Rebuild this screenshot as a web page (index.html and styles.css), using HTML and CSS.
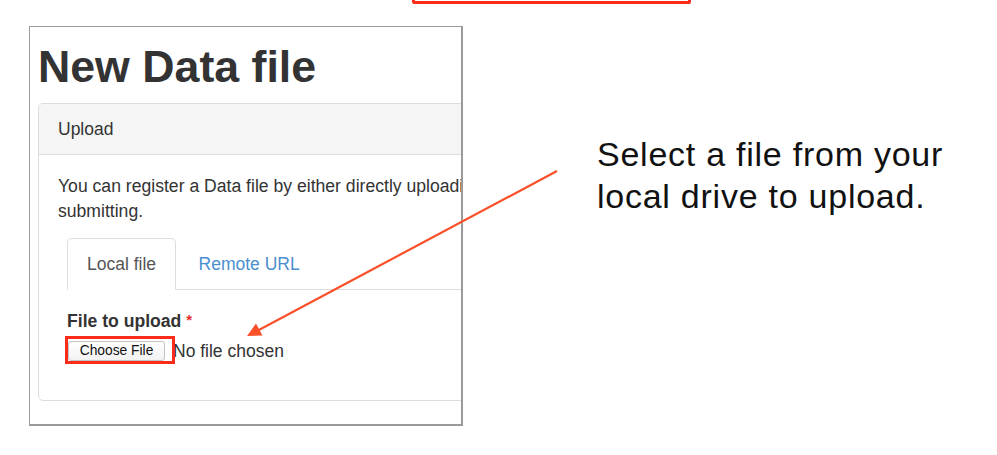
FILE: index.html
```html
<!DOCTYPE html>
<html lang="en">
<head>
<meta charset="utf-8">
<title>New Data file</title>
<link rel="stylesheet" href="styles.css">
</head>
<body>
<div class="top-mark"></div>
<div class="shot">
  <h1 class="title">New Data file</h1>
  <div class="panel">
    <div class="panel-heading">Upload</div>
    <div class="panel-body">
      <p class="intro">You can register a Data file by either directly uploading a<br>submitting.</p>
      <div class="tabs-wrap">
        <ul class="tabs">
          <li class="tab active">Local file</li>
          <li class="tab link">Remote URL</li>
        </ul>
        <div class="tab-content">
          <div class="label">File to upload <span class="req">*</span></div>
          <div class="file-row">
            <span class="btn-wrap"><span class="file-btn">Choose File</span><span class="highlight"></span></span>
            <span class="file-name">No file chosen</span>
          </div>
        </div>
      </div>
    </div>
  </div>
</div>
<div class="note">Select a file from your<br>local drive to upload.</div>
<svg class="arrow" width="997" height="455" viewBox="0 0 997 455">
  <line x1="557" y1="171" x2="257" y2="331" stroke="#f9502a" stroke-width="2.2"/>
  <polygon points="247,336 262.5,335.5 256,323.5" fill="#f9502a"/>
</svg>
</body>
</html>
```
FILE: styles.css
```css
html, body {
  margin: 0;
  padding: 0;
  background: #ffffff;
}
body {
  position: relative;
  width: 997px;
  height: 455px;
  overflow: hidden;
  display: flex;
  align-items: flex-start;
  font-family: "Liberation Sans", Arial, sans-serif;
}
.top-mark {
  position: absolute;
  left: 412px;
  top: -24px;
  width: 279px;
  height: 28px;
  box-sizing: border-box;
  border: 3px solid #fb2c1c;
  border-radius: 2px;
}
.shot {
  margin-left: 29px;
  margin-top: 26px;
  width: 434px;
  height: 400px;
  box-sizing: border-box;
  border: 1px solid #9a9a9a;
  border-right-width: 2px;
  border-bottom-width: 2px;
  overflow: hidden;
  padding: 0 0 0 8px;
  color: #333333;
  flex-shrink: 0;
}
.title {
  margin: 15px 0 11px 0;
  font-size: 44.7px;
  line-height: 50px;
  font-weight: bold;
  color: #333333;
  white-space: nowrap;
}
.panel {
  width: 640px;
  border: 1px solid #dddddd;
  border-radius: 5px;
  background: #ffffff;
}
.panel-heading {
  background: #f5f5f5;
  border-bottom: 1px solid #dddddd;
  border-radius: 5px 5px 0 0;
  padding: 12.5px 19px;
  font-size: 17.5px;
  line-height: 25px;
  color: #333333;
}
.panel-body {
  padding: 19px 19px 20px 19px;
}
.intro {
  margin: 0;
  font-size: 17.6px;
  line-height: 25px;
  color: #333333;
  white-space: nowrap;
}
.tabs-wrap {
  margin-top: 14px;
  padding-left: 9px;
}
.tabs {
  list-style: none;
  margin: 0;
  padding: 0;
  display: flex;
  border-bottom: 1px solid #dddddd;
}
.tab {
  padding: 12.5px 19px;
  font-size: 17.5px;
  line-height: 25px;
  margin-bottom: -1px;
  margin-right: 2.5px;
  border: 1px solid transparent;
  border-radius: 5px 5px 0 0;
}
.tab.active {
  color: #555555;
  background: #ffffff;
  border-color: #dddddd;
  border-bottom-color: transparent;
}
.tab.link {
  color: #4a8ed0;
}
.tab-content {
  padding-top: 17px;
  padding-bottom: 19px;
}
.label {
  font-size: 17.6px;
  line-height: 25px;
  font-weight: bold;
  color: #333333;
}
.req {
  color: #e62e2e;
  font-size: 15px;
  vertical-align: 2px;
}
.file-row {
  margin-top: 7px;
  display: flex;
  align-items: center;
  height: 20px;
}
.btn-wrap {
  position: relative;
  display: inline-flex;
  margin-left: 1px;
}
.file-btn {
  display: inline-block;
  box-sizing: border-box;
  width: 97px;
  height: 20px;
  border: 1px solid #c4c4c4;
  border-radius: 3px;
  background: linear-gradient(#ffffff, #f2f2f2);
  font-size: 13.8px;
  line-height: 18px;
  text-align: center;
  color: #111111;
}
.highlight {
  position: absolute;
  left: -3px;
  top: -5px;
  right: -10px;
  bottom: -3px;
  border: 3px solid #fb2c1c;
}
.file-name {
  margin-left: 8px;
  font-size: 17.5px;
  line-height: 20px;
  color: #333333;
}
.note {
  margin-left: 134px;
  margin-top: 133px;
  font-size: 34px;
  line-height: 42px;
  letter-spacing: 0.75px;
  color: #111111;
  white-space: nowrap;
}
.arrow {
  position: absolute;
  left: 0;
  top: 0;
  pointer-events: none;
}
```
